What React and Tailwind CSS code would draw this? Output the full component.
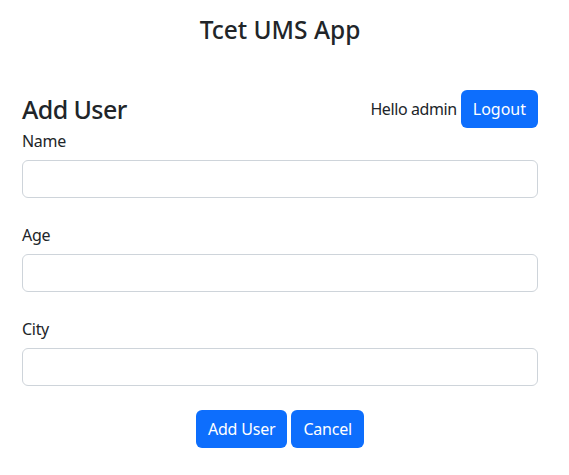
import React, { useState } from 'react'

const AddUser = () => {
  const [user, setUser] = useState({ name: "", age: "", city: "" });

  const onInputChange = (e) => {
    setUser({ ...user, [e.target.name]: e.target.value });
  };

  return (
    <div className="min-h-screen bg-white text-[#212529] font-['Segoe_UI','Noto_Sans',sans-serif] text-[16px]">
      <div className="w-[560px]">
        <h3 className="pt-[15px] text-center text-[24.5px] font-medium leading-[1.2]">Tcet UMS App</h3>

        <div className="px-[22px] pt-[46px]">
          {/* header row */}
          <div className="flex items-center justify-between">
            <h2 className="text-[25px] font-medium leading-[1.2] tracking-[-0.6px]">Add User</h2>
            <div className="flex items-center gap-[4px]">
              <span className="tracking-[-0.4px]">Hello admin</span>
              <button className="h-[38px] rounded-[6px] bg-[#0d6efd] px-[12px] text-white">Logout</button>
            </div>
          </div>

          <form autoComplete="off" onSubmit={(e) => e.preventDefault()}>
            {["name", "age", "city"].map((field, i) => (
              <div key={field} className={i === 0 ? "mt-[1px] mb-[25px]" : "mb-[25px]"}>
                <label className="mb-[7px] block leading-[24px] tracking-[-0.3px]">
                  {field.charAt(0).toUpperCase() + field.slice(1)}
                </label>
                <input
                  type="text"
                  name={field}
                  value={user[field]}
                  onChange={onInputChange}
                  className="block h-[38px] w-full rounded-[6px] border border-[#ced4da] px-[12px] outline-none"
                />
              </div>
            ))}

            {/* Buttons */}
            <div className="-mt-[1px] flex justify-center gap-[4px]">
              <button type="submit" className="h-[38px] rounded-[6px] bg-[#0d6efd] px-[12px] tracking-[-0.2px] text-white">Add User</button>
              <button type="button" className="h-[38px] rounded-[6px] bg-[#0d6efd] px-[12px] tracking-[-0.2px] text-white">Cancel</button>
            </div>
          </form>
        </div>
      </div>
    </div>
  )
}

export default AddUser
